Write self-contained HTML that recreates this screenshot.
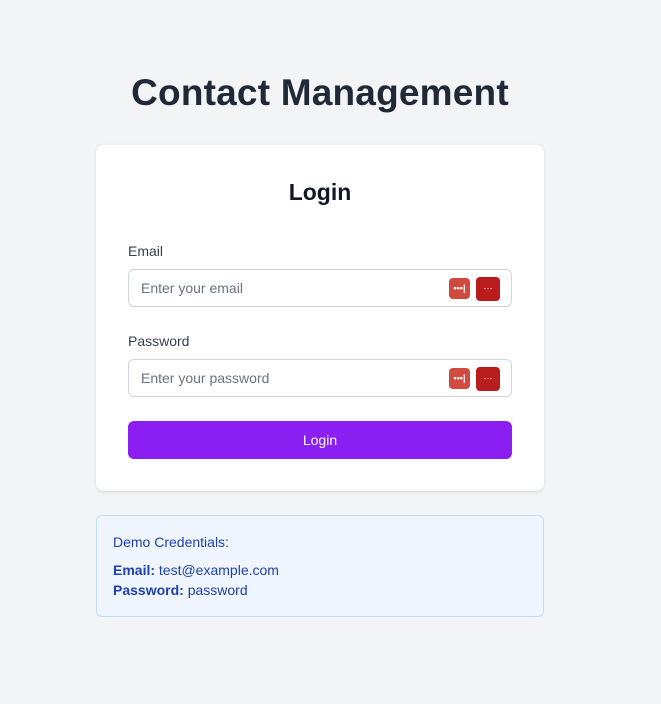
<!DOCTYPE html>
<html><head><style>
*{box-sizing:border-box;margin:0;padding:0}
body{width:661px;height:704px;background:#f3f4f6;font-family:"Liberation Sans",sans-serif;position:relative;overflow:hidden}
h1{position:absolute;top:72px;left:0;width:640px;text-align:center;font-size:37px;font-weight:700;color:#1f2937;letter-spacing:0.2px}
.card{position:absolute;left:96px;top:145px;width:448px;height:346px;background:#fff;border-radius:8px;box-shadow:0 1px 3px rgba(0,0,0,.12)}
.card h2{position:absolute;top:34px;width:100%;text-align:center;font-size:23px;font-weight:700;color:#111827}
.lbl{position:absolute;left:32px;font-size:14px;color:#374151}
.inp{position:absolute;left:32px;width:384px;height:38px;border:1px solid #d1d5db;border-radius:6px;font-size:14px;color:#6b7280;padding:10px 12px}
.i1{position:absolute;right:41px;top:8px;width:21px;height:21px;background:#d04a3f;border-radius:4px;color:#fff;font-size:9px;text-align:center;line-height:21px;font-weight:700}
.i2{position:absolute;right:11px;top:7px;width:24px;height:24px;background:#b91c1c;border-radius:4px;color:#fff;font-size:9px;text-align:center;line-height:22px}
.btn{position:absolute;left:32px;top:276px;width:384px;height:38px;background:#8b1ef0;border-radius:6px;color:#fff;font-size:14px;text-align:center;line-height:38px}
.demo{position:absolute;left:96px;top:515px;width:448px;height:102px;background:#eff6ff;border:1px solid #bfdbfe;border-radius:6px;color:#1e40af;font-size:14px;padding:16px 16px}
.demo p{line-height:20px}
</style></head><body>
<h1>Contact Management</h1>
<div class="card">
<h2>Login</h2>
<div class="lbl" style="top:98px">Email</div>
<div class="inp" style="top:124px">Enter your email<div class="i1">•••|</div><div class="i2">···</div></div>
<div class="lbl" style="top:188px">Password</div>
<div class="inp" style="top:214px">Enter your password<div class="i1">•••|</div><div class="i2">···</div></div>
<div class="btn">Login</div>
</div>
<div class="demo"><p style="margin-bottom:8px">Demo Credentials:</p><p><b>Email:</b> test@example.com</p><p><b>Password:</b> password</p></div>
</body></html>
